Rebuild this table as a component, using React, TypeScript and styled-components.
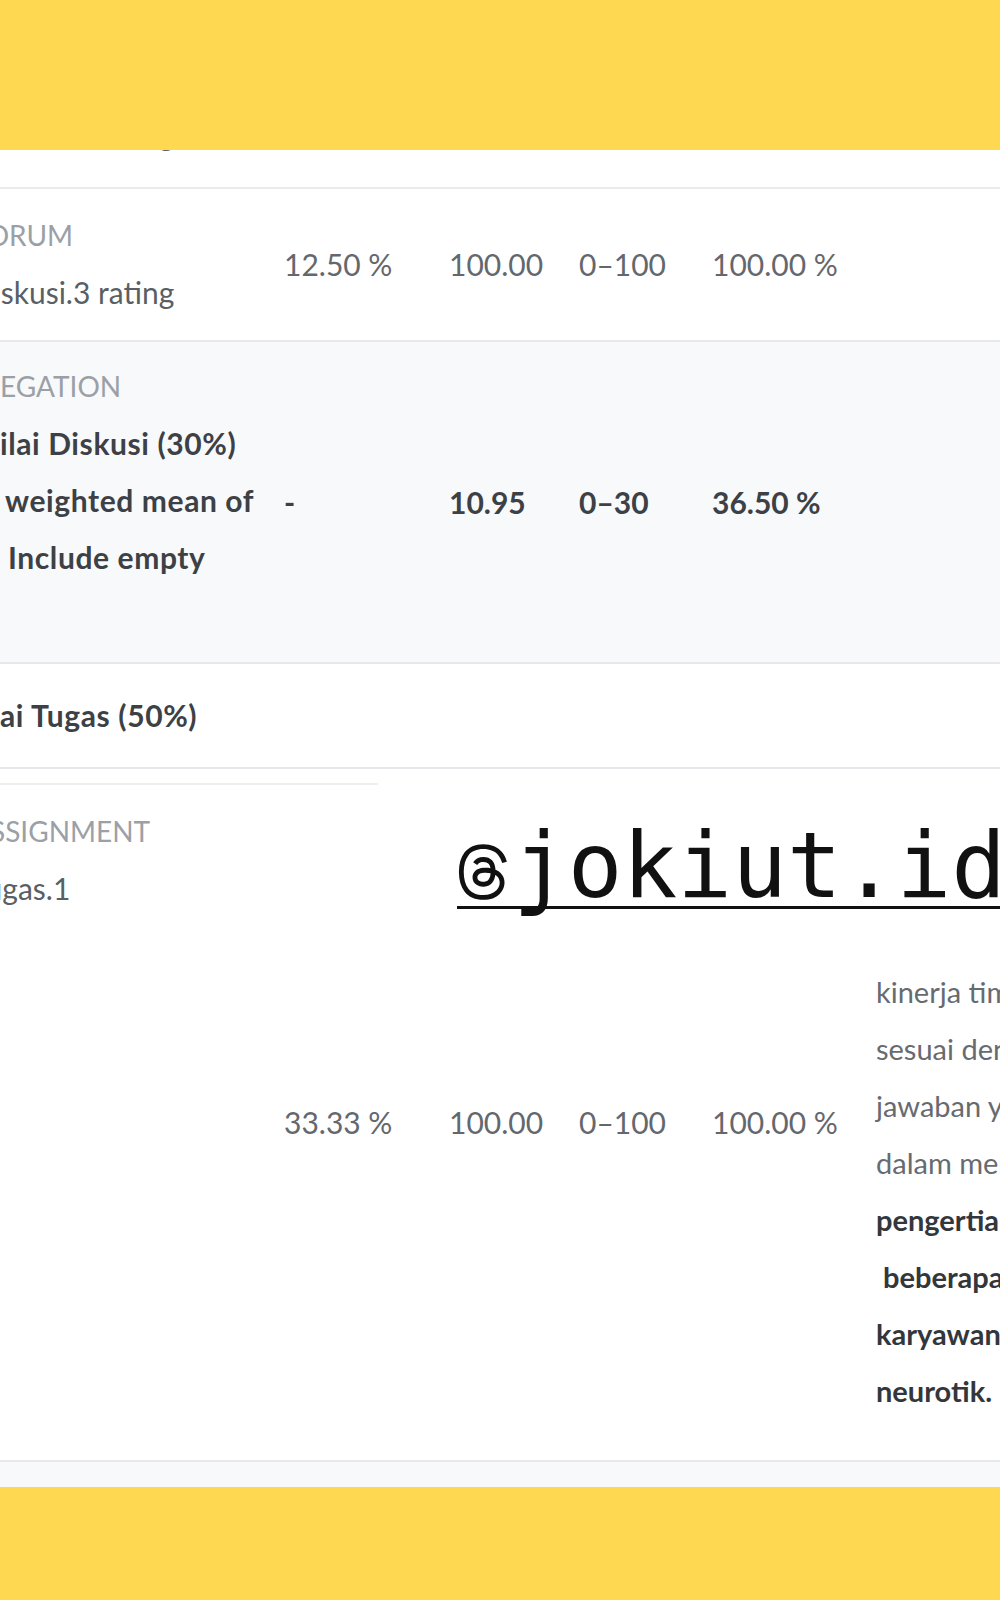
import React from 'react';
import styled, { createGlobalStyle } from 'styled-components';
import { FaThreads } from 'react-icons/fa6';

const GlobalStyle = createGlobalStyle`
  html, body {
    margin: 0;
    padding: 0;
    background: #ffffff;
  }
  body {
    overflow: hidden;
  }
`;

const Page = styled.div`
  position: relative;
  width: 1000px;
  height: 1600px;
  overflow: hidden;
  background: #ffffff;
  font-family: Lato, 'Open Sans', sans-serif;
  font-size: 30px;
  color: #5a5f66;
`;

const Band = styled.div<{ $h: number }>`
  height: ${(p) => p.$h}px;
  background: #fdd850;
`;

const TopSliver = styled.div`
  height: 37px;
  overflow: hidden;
  border-bottom: 2px solid #e9ebee;
`;

const SliverLine = styled.div`
  margin: -44px 0 0 -29px;
  line-height: 57px;
  white-space: nowrap;
`;

const Row = styled.div<{ $shade?: boolean }>`
  display: grid;
  grid-template-columns: 284px 165px 130px 133px 164px 1fr;
  align-items: center;
  background: ${(p) => (p.$shade ? '#f8f9fa' : '#ffffff')};
  border-bottom: 2px solid #e6e8eb;
`;

// item rows sit one indent further left than the crop, so part of their text is cut off
const NameCell = styled.div<{ $pt: number; $pb: number; $indent?: number }>`
  align-self: start;
  margin-left: ${(p) => p.$indent ?? 0}px;
  padding: ${(p) => p.$pt}px 0 ${(p) => p.$pb}px;
  line-height: 57px;
  white-space: nowrap;
  overflow: hidden;
`;

const Label = styled.div`
  font-size: 28px;
  text-transform: uppercase;
  color: #9ba0a7;
`;

const Name = styled.div<{ $bold?: boolean; $shift?: number }>`
  font-weight: ${(p) => (p.$bold ? 700 : 400)};
  letter-spacing: ${(p) => (p.$bold ? '0.6px' : '0')};
  color: ${(p) => (p.$bold ? '#3d4146' : '#5a5f66')};
  padding-left: ${(p) => p.$shift ?? 0}px;
`;

const Value = styled.div<{ $bold?: boolean }>`
  line-height: 57px;
  white-space: nowrap;
  font-weight: ${(p) => (p.$bold ? 700 : 400)};
  color: ${(p) => (p.$bold ? '#3d4146' : '#64686e')};
`;

const Feedback = styled.div`
  align-self: start;
  padding: 178px 0 41px;
  font-size: 29px;
  line-height: 57px;
  white-space: nowrap;
`;

const FeedLine = styled.div<{ $bold?: boolean }>`
  font-weight: ${(p) => (p.$bold ? 700 : 400)};
  color: ${(p) => (p.$bold ? '#33373c' : '#676b70')};
  white-space: pre;
`;

const ItemBlock = styled.div``;

const ShortRule = styled.div`
  margin-top: 14px;
  width: 378px;
  height: 2px;
  background: #eceef0;
`;

const Foot = styled.div`
  height: 25px;
  background: #f8f9fa;
`;

const Sticker = styled.div`
  position: absolute;
  left: 457px;
  right: -40px;
  top: 826px;
  display: flex;
  align-items: flex-end;
  border-bottom: 3px solid #111111;
  color: #111111;
  white-space: nowrap;
`;

const Handle = styled.span`
  font-family: 'DejaVu Sans Mono', 'Liberation Mono', monospace;
  font-size: 91px;
  line-height: 80px;
`;

const Logo = styled(FaThreads)`
  width: 52px;
  height: 60px;
  margin: 0 4px 4px 0;
  flex: none;
`;

const feedback: { text: string; bold?: boolean }[] = [
  { text: 'kinerja tim dan' },
  { text: 'sesuai dengan' },
  { text: 'jawaban yang' },
  { text: 'dalam menjawab' },
  { text: 'pengertian', bold: true },
  { text: ' beberapa', bold: true },
  { text: 'karyawan', bold: true },
  { text: 'neurotik.', bold: true },
];

const App: React.FC = () => (
  <Page>
    <GlobalStyle />
    <Band $h={150} />

    <TopSliver>
      <SliverLine>Diskusi.2 rating</SliverLine>
    </TopSliver>

    <Row>
      <NameCell $pt={18} $pb={19} $indent={-29}>
        <Label>Forum</Label>
        <Name>Diskusi.3 rating</Name>
      </NameCell>
      <Value>12.50 %</Value>
      <Value>100.00</Value>
      <Value>0–100</Value>
      <Value>100.00 %</Value>
      <div />
    </Row>

    <Row $shade>
      <NameCell $pt={16} $pb={76}>
        <Label>egation</Label>
        <Name $bold>ilai Diskusi (30%)</Name>
        <Name $bold $shift={5}>weighted mean of</Name>
        <Name $bold $shift={8}>Include empty</Name>
      </NameCell>
      <Value $bold>-</Value>
      <Value $bold>10.95</Value>
      <Value $bold>0–30</Value>
      <Value $bold>36.50 %</Value>
      <div />
    </Row>

    <Row>
      <NameCell $pt={23} $pb={23}>
        <Name $bold>ai Tugas (50%)</Name>
      </NameCell>
    </Row>

    <ItemBlock>
      <ShortRule />
      <Row>
        <NameCell $pt={18} $pb={0} $indent={-29}>
          <Label>Assignment</Label>
          <Name>Tugas.1</Name>
        </NameCell>
        <Value>33.33 %</Value>
        <Value>100.00</Value>
        <Value>0–100</Value>
        <Value>100.00 %</Value>
        <Feedback>
          {feedback.map((l) => (
            <FeedLine key={l.text} $bold={l.bold}>
              {l.text}
            </FeedLine>
          ))}
        </Feedback>
      </Row>
    </ItemBlock>
    <Foot />

    <Band $h={113} />

    <Sticker>
      <Logo />
      <Handle>jokiut.id</Handle>
    </Sticker>
  </Page>
);

export default App;
